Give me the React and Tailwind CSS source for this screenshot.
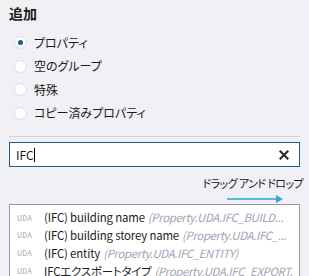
const options = ["プロパティ", "空のグループ", "特殊", "コピー済みプロパティ"];

const rows = [
  { name: "(IFC) building name", prop: "(Property.UDA.IFC_BUILD..." },
  { name: "(IFC) building storey name", prop: "(Property.UDA.IFC_..." },
  { name: "(IFC) entity", prop: "(Property.UDA.IFC_ENTITY)" },
  { name: "IFCエクスポートタイプ", prop: "(Property.UDA.IFC_EXPORT..." },
];

const font = { fontFamily: '"Noto Sans CJK JP", "Noto Sans", sans-serif' };

export default function App() {
  return (
    <div
      className="w-[309px] h-[276px] overflow-hidden bg-[#f0f0f5] text-[#1b1b1b] px-[9px] pt-[3px] [font-feature-settings:'palt']"
      style={font}
    >
      <h2 className="text-[14px] leading-[20px] font-bold">追加</h2>

      <div className="mt-[8px] flex flex-col">
        {options.map((label, i) => (
          <label key={label} className="flex items-center h-[23.5px] pl-[5px]">
            <span className="shrink-0 w-[13px] h-[13px] rounded-full bg-white border border-[#dcdce4] flex items-center justify-center">
              {i === 0 && <span className="w-[5px] h-[5px] rounded-full bg-[#1a5c96]" />}
            </span>
            <span className="ml-[7px] text-[12px] leading-none">{label}</span>
          </label>
        ))}
      </div>

      <div className="mt-[11px] h-px bg-[#d4d4dc]" />

      <div className="mt-[5px] h-[25px] bg-white border border-[#1f5e93] flex items-center pl-[6px] pr-[10px]">
        <span className="text-[12px] leading-none">IFC</span>
        <span className="w-px h-[14px] bg-black" />
        <svg className="ml-auto" width="10" height="10" viewBox="0 0 10 10">
          <path d="M1.5 1.5 L8.5 8.5 M8.5 1.5 L1.5 8.5" stroke="#2e2e36" strokeWidth="2.2" strokeLinecap="square" />
        </svg>
      </div>

      <div className="mt-[11px] -mr-[3px] flex justify-end">
        <span className="text-[11px] leading-none tracking-[-0.6px]">ドラッグ アンド ドロップ</span>
      </div>
      <div className="mt-[6px] flex justify-end pr-[17px]">
        <svg width="56" height="8" viewBox="0 0 56 8">
          <path d="M0 4 H50" stroke="#5ab7e6" strokeWidth="2" />
          <path d="M49 0 L56 4 L49 8 Z" fill="#3aa6e0" />
        </svg>
      </div>

      <div className="mt-[1px] bg-white border border-[#9a9aa2] pt-[4px] pl-[7px] pr-[6px]">
        {rows.map((r) => (
          <div key={r.name} className="flex items-center h-[17.8px] whitespace-nowrap overflow-hidden text-[11.4px] tracking-[-0.15px]">
            <span className="shrink-0 w-[27px] text-[7px] text-[#a0a0ab] tracking-[0.3px]">UDA</span>
            <span className="shrink-0 leading-none">{r.name}</span>
            <span className="ml-[3px] leading-none italic text-[#a3a3b4] tracking-[-0.35px]">{r.prop}</span>
          </div>
        ))}
      </div>
    </div>
  );
}
